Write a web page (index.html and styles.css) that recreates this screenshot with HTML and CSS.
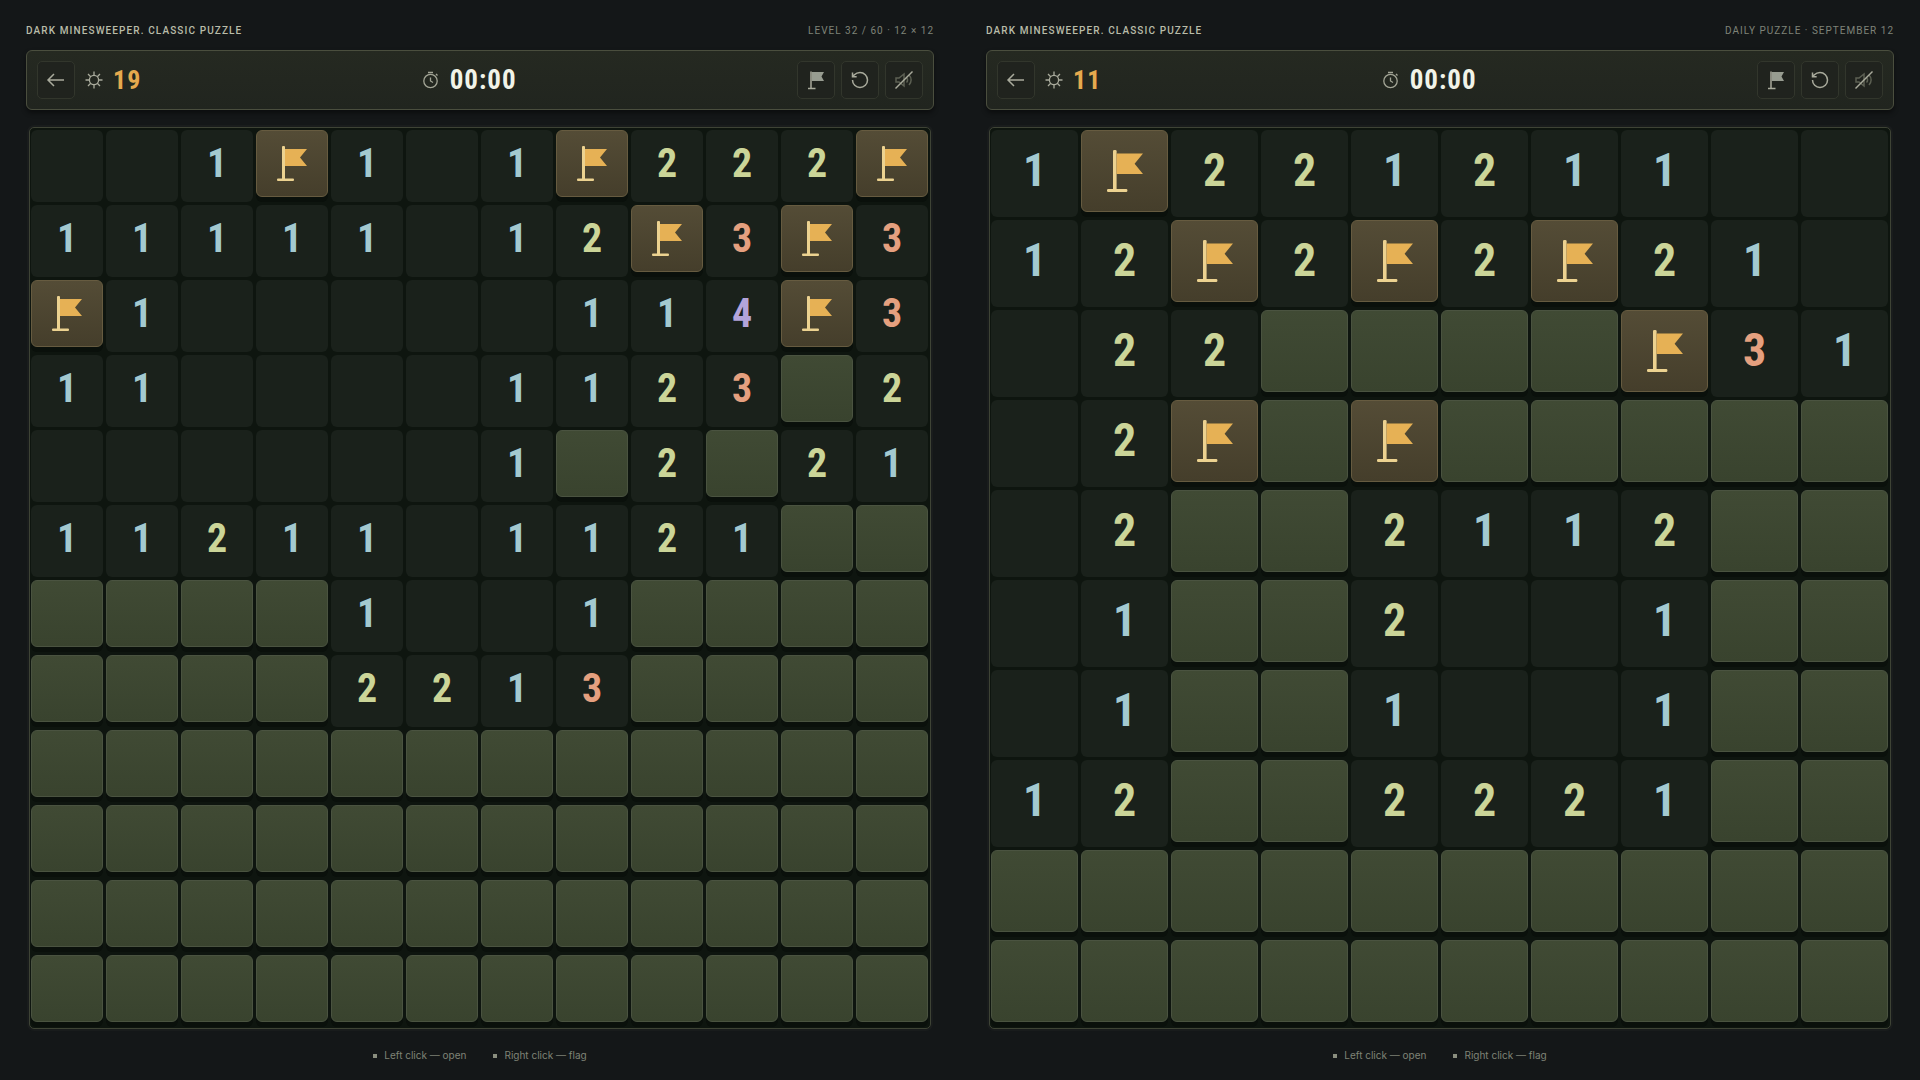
FILE: index.html
```html
<!DOCTYPE html>
<html lang="en">
<head>
    <meta charset="UTF-8">
    <title>Dark Minesweeper</title>
    <link rel="stylesheet" href="styles.css">
</head>
<body>
    <svg class="defs" width="0" height="0">
        <symbol id="flag" viewBox="0 0 30 35">
            <rect x="5" y="0" width="3" height="34" rx="1" fill="#ecd290"/>
            <rect x="0" y="32.500" width="17" height="2.500" rx="1" fill="#ecd290"/>
            <path d="M8 3H30L23 11.500L30 20H8Z" fill="#e6b155"/>
        </symbol>
        <symbol id="i-back" viewBox="0 0 20 20"><path d="M18 10H2M8 4L2 10L8 16"/></symbol>
        <symbol id="i-sun" viewBox="0 0 18 18"><circle cx="9" cy="9" r="4.600"/><path d="M9 .5V4.400M9 13.600V17.500M.5 9H4.400M13.600 9H17.500M3 3L5.700 5.700M12.300 12.300L15 15M15 3L12.300 5.700M5.700 12.300L3 15"/></symbol>
        <symbol id="i-clock" viewBox="0 0 18 18"><circle cx="8.500" cy="10" r="6.700"/><path d="M6 1.500H11M8.500 6.500V10L11 11.500M14 3L15.500 4.500"/></symbol>
        <symbol id="i-flag" viewBox="0 0 20 20"><path d="M5 1.500V18.500M2 18.500H9.500"/><path class="fill" d="M5.800 2H18L15.500 6.500L18 11H5.800Z"/></symbol>
        <symbol id="i-undo" viewBox="0 0 24 24"><path d="M3 12a9 9 0 1 0 9-9 9.750 9.750 0 0 0-6.740 2.740L3 8M3 3v5h5"/></symbol>
        <symbol id="i-mute" viewBox="0 0 20 20"><path class="dim" d="M2 8V12H5L10 16V4L5 8ZM12.500 7.500A3.500 3.500 0 0 1 12.500 12.500M15 5A7 7 0 0 1 15 15"/><path d="M1.500 18.500L18.500 1.500"/></symbol>
    </svg>
    <main class="page">
        <section class="game">
            <div class="topline">
                <span class="title">DARK MINESWEEPER. CLASSIC PUZZLE</span>
                <span class="level">LEVEL 32 / 60 · 12 × 12</span>
            </div>
            <div class="toolbar">
                <div class="tool-left">
                    <button class="tool"><svg class="ico"><use href="#i-back"/></svg></button>
                    <svg class="sun"><use href="#i-sun"/></svg>
                    <span class="count">19</span>
                </div>
                <div class="timer">
                    <svg class="clock"><use href="#i-clock"/></svg>
                    <span class="time">00:00</span>
                </div>
                <div class="tool-right">
                    <button class="tool"><svg class="ico"><use href="#i-flag"/></svg></button>
                    <button class="tool"><svg class="ico"><use href="#i-undo"/></svg></button>
                    <button class="tool"><svg class="ico"><use href="#i-mute"/></svg></button>
                </div>
            </div>
            <div class="board" id="board-a"></div>
            <div class="legend">
                <span class="hint">Left click — open</span>
                <span class="hint">Right click — flag</span>
            </div>
        </section>
        <section class="game">
            <div class="topline">
                <span class="title">DARK MINESWEEPER. CLASSIC PUZZLE</span>
                <span class="level">DAILY PUZZLE · SEPTEMBER 12</span>
            </div>
            <div class="toolbar">
                <div class="tool-left">
                    <button class="tool"><svg class="ico"><use href="#i-back"/></svg></button>
                    <svg class="sun"><use href="#i-sun"/></svg>
                    <span class="count">11</span>
                </div>
                <div class="timer">
                    <svg class="clock"><use href="#i-clock"/></svg>
                    <span class="time">00:00</span>
                </div>
                <div class="tool-right">
                    <button class="tool"><svg class="ico"><use href="#i-flag"/></svg></button>
                    <button class="tool"><svg class="ico"><use href="#i-undo"/></svg></button>
                    <button class="tool"><svg class="ico"><use href="#i-mute"/></svg></button>
                </div>
            </div>
            <div class="board board-10" id="board-b"></div>
            <div class="legend">
                <span class="hint">Left click — open</span>
                <span class="hint">Right click — flag</span>
            </div>
        </section>
    </main>
    <script src="script.js"></script>
</body>
</html>
```

FILE: styles.css
```css
body {
    margin: 0;
    background-color: #141718;
    font-family: "Inter", sans-serif;
}
.defs {
    position: absolute;
}
.page {
    display: grid;
    grid-template-columns: 908px 908px;
    gap: 52px;
    padding: 23px 26px 0;
}
.topline {
    display: flex;
    justify-content: space-between;
    align-items: center;
    height: 14px;
    margin-bottom: 13px;
    font-family: "Roboto", sans-serif;
    font-size: 10px;
    letter-spacing: 1px;
}
.title {
    color: #b9bca8;
    font-weight: 500;
    letter-spacing: 1.11px;
}
.level {
    color: #7f8378;
}
.toolbar {
    display: flex;
    justify-content: space-between;
    align-items: center;
    box-sizing: border-box;
    height: 60px;
    padding: 0 10px;
    background: linear-gradient(#252921, #21251f);
    border: 1px solid #4a4e3e;
    border-radius: 6px;
    box-shadow: 0 3px 5px rgba(0, 0, 0, 0.45);
}
.tool-left,
.tool-right,
.timer {
    display: flex;
    align-items: center;
}
.tool-right {
    gap: 6px;
}
.tool {
    display: flex;
    align-items: center;
    justify-content: center;
    width: 38px;
    height: 38px;
    padding: 0;
    background: #20231e;
    border: 1px solid #32362c;
    border-radius: 5px;
}
.ico {
    width: 20px;
    height: 20px;
    fill: none;
    stroke: #a9ab9c;
    stroke-width: 1.5;
}
#i-undo {
    stroke-width: 1.8;
}
.fill {
    fill: #979c90;
    stroke: none;
}
.dim {
    stroke: #5c6053;
}
.sun {
    width: 18px;
    height: 18px;
    margin-left: 10px;
    fill: none;
    stroke: #a9ab9c;
    stroke-width: 1.3;
}
.count {
    margin-left: 10px;
    font-family: "Roboto", sans-serif;
    font-size: 26px;
    font-weight: 700;
    font-stretch: 75%;
    letter-spacing: 1px;
    color: #e6a94e;
}
.clock {
    width: 18px;
    height: 18px;
    fill: none;
    stroke: #a3a596;
    stroke-width: 1.3;
}
.time {
    margin-left: 10px;
    font-family: "Roboto", sans-serif;
    font-size: 27px;
    font-weight: 700;
    font-stretch: 75%;
    letter-spacing: 1px;
    color: #f1f3e8;
}
.board {
    display: grid;
    grid-template-columns: repeat(12, 72px);
    grid-auto-rows: 72px;
    gap: 3px;
    width: fit-content;
    margin: 17px auto 0;
    padding: 2px 2px 1px 1px;
    background: #0e150f;
    border: 1px solid #3e4335;
    border-radius: 5px;
    box-shadow: 0 0 0 2px #191c1c;
}
.board-10 {
    grid-template-columns: repeat(10, 87px);
    grid-auto-rows: 87px;
}
.cell {
    display: flex;
    align-items: center;
    justify-content: center;
    box-sizing: border-box;
    background: #1a211b;
    border-radius: 6px;
    font-family: "Roboto", sans-serif;
    font-size: 40px;
    font-weight: 700;
    font-stretch: 75%;
}
.num {
    padding-bottom: 5px;
}
.board-10 .cell {
    font-size: 46px;
}
.board-10 .num {
    padding-bottom: 7px;
}
.n1 { color: #a3c9d0; }
.n2 { color: #cbd598; }
.n3 { color: #e5a07f; }
.n4 { color: #b3a4da; }
.hidden,
.flagged {
    height: calc(100% - 5px);
    box-shadow: 0 5px 0 #0a100b;
}
.hidden {
    background: linear-gradient(#404a34, #39432e);
    border: 1px solid #4a5340;
}
.flagged {
    background: linear-gradient(#544c36, #453e2b);
    border: 1px solid #665b40;
}
.flag-icon {
    width: 30px;
    height: 35px;
}
.board-10 .flag-icon {
    width: 36px;
    height: 42px;
}
.legend {
    display: flex;
    justify-content: center;
    gap: 27px;
    margin-top: 20px;
    font-size: 10px;
    color: #7f8376;
}
.hint::before {
    content: "";
    display: inline-block;
    width: 4px;
    height: 4px;
    margin-right: 7px;
    vertical-align: 1px;
    background: #8a8e7e;
}
```

FILE: script.js
```js
// . open, F flag, H closed, digits are numbers
const boardA = [
    '..1F1.1F222F',
    '11111.12F3F3',
    'F1.....114F3',
    '11....1123H2',
    '......1H2H21',
    '11211.1121HH',
    'HHHH1..1HHHH',
    'HHHH2213HHHH',
    'HHHHHHHHHHHH',
    'HHHHHHHHHHHH',
    'HHHHHHHHHHHH',
    'HHHHHHHHHHHH'
];
const boardB = [
    '1F221211..',
    '12F2F2F21.',
    '.22HHHHF31',
    '.2FHFHHHHH',
    '.2HH2112HH',
    '.1HH2..1HH',
    '.1HH1..1HH',
    '12HH2221HH',
    'HHHHHHHHHH',
    'HHHHHHHHHH'
];

function drawBoard(id, rows) {
    let html = '';
    rows.forEach(row => {
        for (const c of row) {
            if (c === 'F') {
                html += '<div class="cell flagged"><svg class="flag-icon"><use href="#flag"/></svg></div>';
            } else if (c === 'H') {
                html += '<div class="cell hidden"></div>';
            } else if (c === '.') {
                html += '<div class="cell"></div>';
            } else {
                html += `<div class="cell num n${c}">${c}</div>`;
            }
        }
    });
    document.getElementById(id).innerHTML = html;
}

drawBoard('board-a', boardA);
drawBoard('board-b', boardB);
```
